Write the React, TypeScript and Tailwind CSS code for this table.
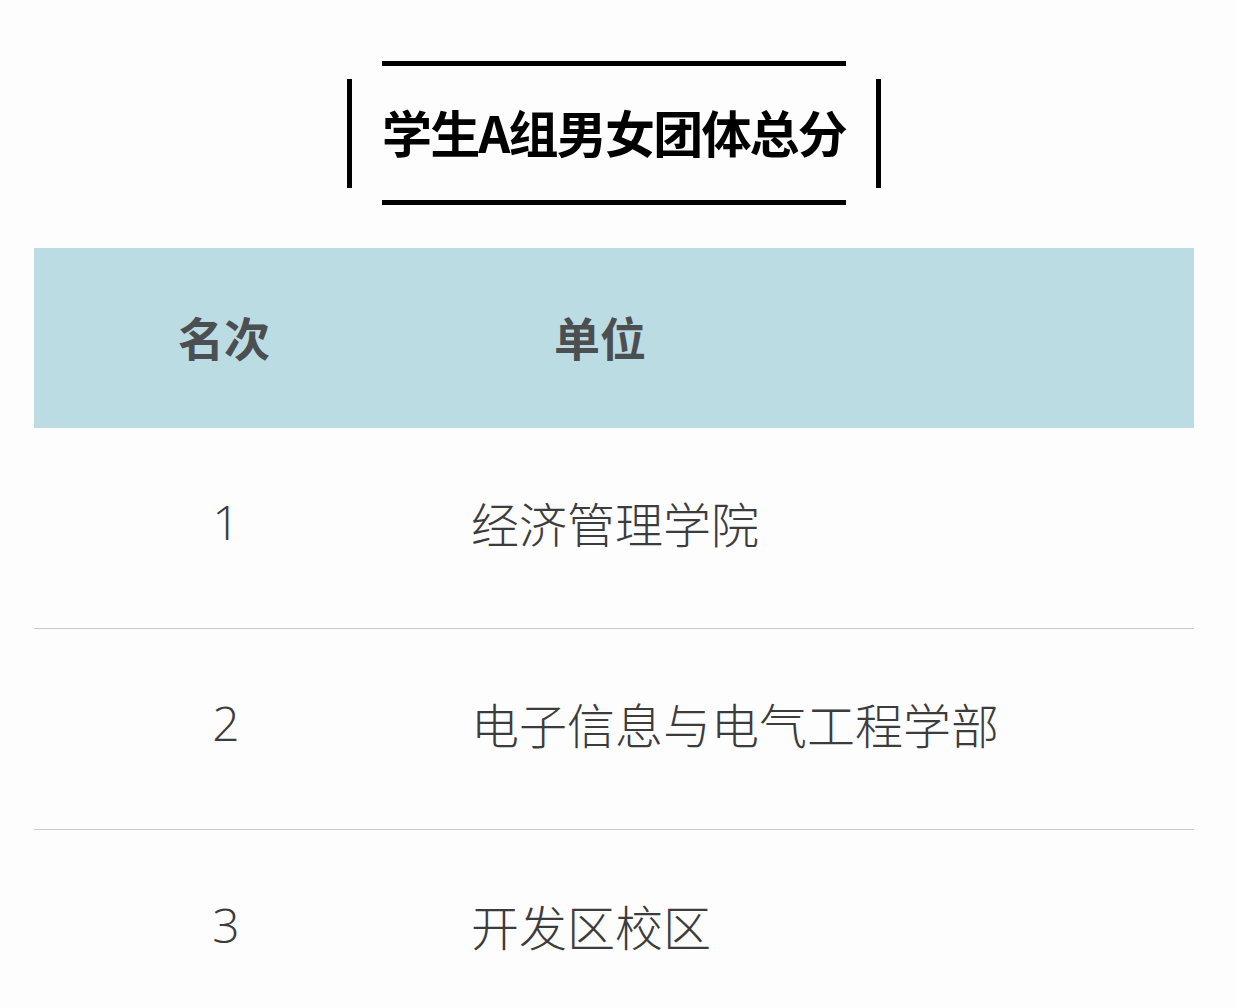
import React from 'react'

const rows = [
  { rank: '1', unit: '经济管理学院' },
  { rank: '2', unit: '电子信息与电气工程学部' },
  { rank: '3', unit: '开发区校区' },
]

const font = { fontFamily: '"Noto Sans CJK SC", "Noto Sans", sans-serif' }

export default function App() {
  return (
    <div className="w-[1236px] h-[1008px] overflow-hidden bg-[#fdfdfd]" style={font}>
      {/* Title */}
      <div className="flex items-center justify-center pt-[61px] pr-[8px] gap-[30px]">
        <div className="w-[5px] h-[109px] bg-black"></div>
        <div className="flex flex-col items-center w-[464px]">
          <div className="w-[464px] h-[5px] bg-black"></div>
          <h1 className="h-[134px] w-[464px] pb-[4px] flex items-center justify-center whitespace-nowrap text-[50px] font-bold text-black tracking-[-1.8px] leading-none">
            学生A组男女团体总分
          </h1>
          <div className="w-[464px] h-[5px] bg-black"></div>
        </div>
        <div className="w-[5px] h-[109px] bg-black"></div>
      </div>

      {/* Table */}
      <div className="mt-[43px] mx-[34px] w-[1160px]">
        <div className="flex items-center h-[180px] pb-[5px] bg-[#bcdce4] text-[#4b4f51] font-bold text-[46px] leading-none">
          <div className="w-[380px] text-center">名次</div>
          <div className="w-[372px] text-center">单位</div>
        </div>
        {rows.map((r, i) => (
          <div
            key={r.rank}
            className={`flex items-center h-[201px] pb-[12px] text-[#3c3c3c] text-[48px] leading-none ${
              i < rows.length - 1 ? 'border-b border-[#c9c9c9]' : ''
            }`}
          >
            <div className="w-[384px] text-center" style={{ fontFamily: '"Open Sans", "Noto Sans", sans-serif', fontWeight: 300 }}>
              {r.rank}
            </div>
            <div className="pl-[53px] font-light">{r.unit}</div>
          </div>
        ))}
      </div>
    </div>
  )
}
